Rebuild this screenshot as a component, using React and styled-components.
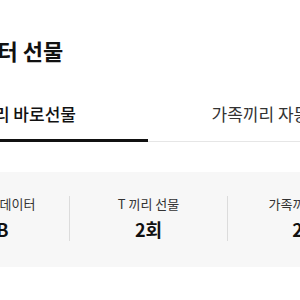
import styled, { createGlobalStyle } from 'styled-components';

const GlobalStyle = createGlobalStyle`
  body {
    margin: 0;
    background: #fff;
    overflow: hidden;
    font-family: 'Noto Sans CJK KR', 'Noto Sans', sans-serif;
    color: #111;
  }
`;

const stats = [
  { id: 'data', label: '선물 가능 데이터', value: '2GB' },
  { id: 'tgift', label: 'T 끼리 선물', value: '2회' },
  { id: 'family', label: '가족끼리 선물', value: '2회' },
];

const tabs = [
  { id: 'direct', label: 'T 끼리 바로선물' },
  { id: 'auto', label: '가족끼리 자동선물' },
];

const App = () => {
  return (
    <Page>
      <GlobalStyle />
      <Title>데이터 선물</Title>
      <TabBar>
        {tabs.map((tab, i) => (
          <Tab key={tab.id} $active={i === 0}>
            {tab.label}
          </Tab>
        ))}
      </TabBar>
      <StatBox>
        {stats.map((stat) => (
          <Stat key={stat.id}>
            <StatLabel>{stat.label}</StatLabel>
            <StatValue>{stat.value}</StatValue>
          </Stat>
        ))}
      </StatBox>
    </Page>
  );
};

const Page = styled.div`
  width: 512px;
  margin-left: -108px;
  padding-top: 36px;
`;

const Title = styled.h1`
  margin: 0 0 26px;
  padding-left: 65px;
  font-size: 22px;
  line-height: 28px;
  font-weight: 700;
  color: #111;
`;

const TabBar = styled.div`
  display: flex;
  border-bottom: 1px solid #e6e6e6;
`;

const Tab = styled.div`
  flex: 1;
  text-align: center;
  padding: 12px 0 13px;
  margin-bottom: -1px;
  font-size: 17px;
  line-height: 24px;
  font-weight: ${({ $active }) => ($active ? 500 : 400)};
  color: ${({ $active }) => ($active ? '#111' : '#333')};
  border-bottom: 3px solid ${({ $active }) => ($active ? '#111' : 'transparent')};
`;

const StatBox = styled.div`
  display: grid;
  grid-template-columns: repeat(3, 1fr);
  margin: 30px 20px 0;
  padding: 24px 0 26px;
  background: #f7f7f7;
`;

const Stat = styled.div`
  display: flex;
  flex-direction: column;
  align-items: center;
  gap: 5px;

  &:not(:first-of-type) {
    border-left: 1px solid #dcdcdc;
  }
`;

const StatLabel = styled.span`
  font-size: 13px;
  line-height: 16px;
  color: #333;
`;

const StatValue = styled.span`
  font-size: 18px;
  line-height: 24px;
  font-weight: 700;
  color: #111;
`;

export default App;
